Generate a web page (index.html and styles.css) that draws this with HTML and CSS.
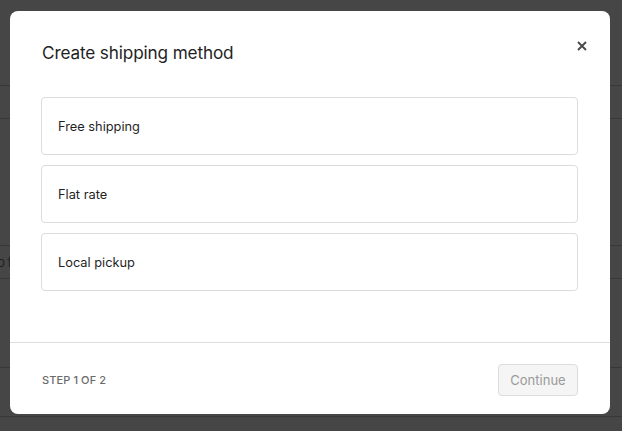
FILE: index.html
```html
<!DOCTYPE html>
<html lang="en">
<head>
<meta charset="utf-8">
<title>Create shipping method</title>
<link rel="stylesheet" href="styles.css">
</head>
<body>
<div class="page">
  <div class="band b1"></div>
  <div class="band b2"></div>
  <div class="band b3"></div>
  <div class="band b4"><span class="peek">to free</span></div>
  <div class="band b5"></div>
  <div class="band b6"></div>
</div>
<div class="overlay">
  <div class="modal" role="dialog" aria-label="Create shipping method">
    <div class="modal-body">
      <div class="modal-head">
        <h1 class="modal-title">Create shipping method</h1>
        <button class="close" aria-label="Close">
          <svg viewBox="0 0 10 10" width="10" height="10"><path d="M1 1 L9 9 M9 1 L1 9" stroke="#4a4a4a" stroke-width="1.9" stroke-linecap="butt" fill="none"/></svg>
        </button>
      </div>
      <div class="options">
        <div class="option">Free shipping</div>
        <div class="option">Flat rate</div>
        <div class="option">Local pickup</div>
      </div>
    </div>
    <div class="modal-foot">
      <span class="step">Step 1 of 2</span>
      <button class="continue" disabled>Continue</button>
    </div>
  </div>
</div>
</body>
</html>
```
FILE: styles.css
```css
* { box-sizing: border-box; }
html, body { margin: 0; padding: 0; }
body {
  width: 622px;
  height: 431px;
  overflow: hidden;
  background: #464646;
  font-family: Inter, "Helvetica Neue", "Liberation Sans", Arial, sans-serif;
  position: relative;
}
.page { display: flex; flex-direction: column; }
.band { border-bottom: 1px solid #383838; }
.b1 { height: 86px; }
.b2 { height: 33px; }
.b3 { height: 127px; }
.b4 { height: 33px; display: flex; align-items: center; overflow: hidden; }
.b5 { height: 89px; }
.b6 { height: 49px; }
.peek {
  color: #222;
  font-size: 13px;
  margin-left: -7px;
  word-spacing: -1px;
  white-space: nowrap;
}
.overlay {
  position: absolute;
  inset: 0;
  padding: 11px 12px 0 10px;
}
.modal {
  width: 600px;
  height: 403px;
  background: #fff;
  border-radius: 8px;
  display: flex;
  flex-direction: column;
}
.modal-body {
  flex: 1;
  padding: 30px 32px 0 31px;
  border-bottom: 1px solid #dedede;
}
.modal-head {
  display: flex;
  justify-content: space-between;
  align-items: flex-start;
  height: 56px;
}
.modal-title {
  margin: 0 0 0 1px;
  font-size: 17.2px;
  line-height: 24px;
  font-weight: 400;
  color: #1f1f1f;
  letter-spacing: -0.15px;
}
.close {
  border: 0;
  background: none;
  padding: 0;
  margin: 0 -9px 0 0;
  width: 10px;
  height: 10px;
  display: block;
  cursor: pointer;
}
.close svg { display: block; }
.options { display: flex; flex-direction: column; gap: 10px; }
.option {
  height: 58px;
  border: 1px solid #dcdcdc;
  border-radius: 4px;
  padding: 0 16px;
  display: flex;
  align-items: center;
  font-size: 12.8px;
  color: #1f1f1f;
}
.modal-foot {
  height: 71px;
  padding: 0 32px 0 32px;
  display: flex;
  align-items: center;
  justify-content: space-between;
}
.step {
  text-transform: uppercase;
  font-size: 11px;
  font-weight: 500;
  color: #6b6b6b;
  letter-spacing: 0.1px;
  margin-top: 2px;
}
.continue {
  width: 80px;
  height: 32px;
  margin-top: 3px;
  border: 1px solid #dcdcdc;
  border-radius: 4px;
  background: #f5f5f5;
  color: #9a9a9a;
  font-family: inherit;
  font-size: 13px;
  padding: 0;
}
```
